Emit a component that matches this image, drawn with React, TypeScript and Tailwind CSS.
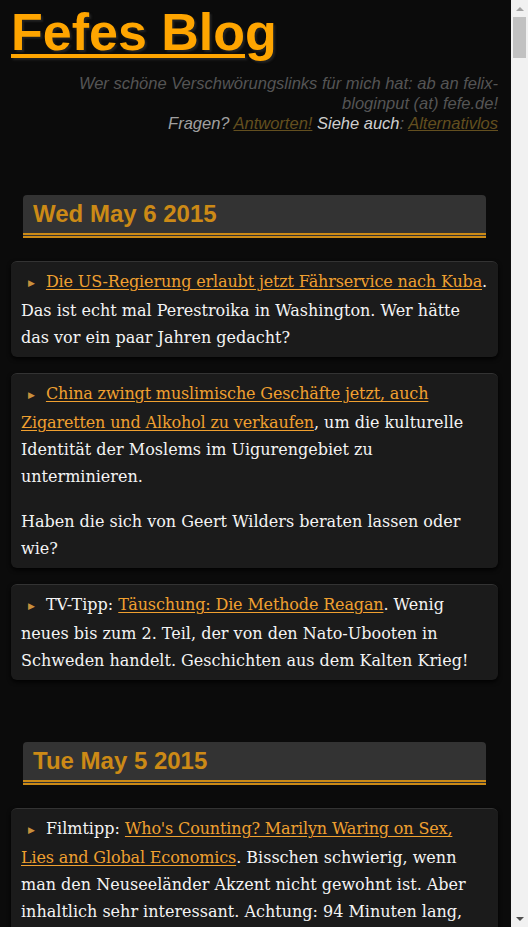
import React from 'react';

type Part = string | { href: string; text: string };

type Post = {
  paragraphs: Part[][];
};

type Day = {
  date: string;
  posts: Post[];
};

const days: Day[] = [
  {
    date: 'Wed May 6 2015',
    posts: [
      {
        paragraphs: [
          [
            { href: '#', text: 'Die US-Regierung erlaubt jetzt Fährservice nach Kuba' },
            '. Das ist echt mal Perestroika in Washington. Wer hätte das vor ein paar Jahren gedacht?',
          ],
        ],
      },
      {
        paragraphs: [
          [
            { href: '#', text: 'China zwingt muslimische Geschäfte jetzt, auch Zigaretten und Alkohol zu verkaufen' },
            ', um die kulturelle Identität der Moslems im Uigurengebiet zu unterminieren.',
          ],
          ['Haben die sich von Geert Wilders beraten lassen oder wie?'],
        ],
      },
      {
        paragraphs: [
          [
            'TV-Tipp: ',
            { href: '#', text: 'Täuschung: Die Methode Reagan' },
            '. Wenig neues bis zum 2. Teil, der von den Nato-Ubooten in Schweden handelt. Geschichten aus dem Kalten Krieg!',
          ],
        ],
      },
    ],
  },
  {
    date: 'Tue May 5 2015',
    posts: [
      {
        paragraphs: [
          [
            'Filmtipp: ',
            { href: '#', text: "Who's Counting? Marilyn Waring on Sex, Lies and Global Economics" },
            '. Bisschen schwierig, wenn man den Neuseeländer Akzent nicht gewohnt ist. Aber inhaltlich sehr interessant. Achtung: 94 Minuten lang, aber es lohnt sich.',
          ],
        ],
      },
      {
        paragraphs: [
          [
            { href: '#', text: 'Die Bundesregierung hat da mal eine Frage' },
            '. Und zwar geht es um die Vorratsdatenspeicherung.',
          ],
        ],
      },
    ],
  },
];

const PostCard: React.FC<{ post: Post }> = ({ post }) => (
  <div className="rounded-[6px] border-t border-[#333] bg-[#1b1b1b] px-[10px] py-[6px] shadow-[0_2px_4px_rgba(0,0,0,0.9)]">
    {post.paragraphs.map((para, i) => (
      <p key={i} className={i > 0 ? 'mt-[18px]' : ''}>
        {i === 0 && (
          <span className="mr-[11px] ml-[7px] inline-block align-[1px] text-[9px] text-[#c8903c]">▶</span>
        )}
        {para.map((part, j) =>
          typeof part === 'string' ? (
            <span key={j}>{part}</span>
          ) : (
            <a
              key={j}
              href={part.href}
              className="tracking-[-0.15px] text-[#f0a030] underline underline-offset-[2px]"
            >
              {part.text}
            </a>
          ),
        )}
      </p>
    ))}
  </div>
);

// fake window scrollbar, the reference shows a classic one
const Scrollbar: React.FC = () => (
  <div className="flex h-full w-[17px] shrink-0 flex-col items-center bg-[#f1f1f1]">
    <div className="flex h-[17px] w-full items-center justify-center">
      <div className="h-0 w-0 border-x-[4px] border-b-[4px] border-x-transparent border-b-[#a3a3a3]" />
    </div>
    <div className="h-[41px] w-[13px] bg-[#c1c1c1]" />
    <div className="flex-1" />
    <div className="flex h-[17px] w-full items-center justify-center">
      <div className="h-0 w-0 border-x-[4px] border-t-[4px] border-x-transparent border-t-[#505050]" />
    </div>
  </div>
);

export default function App() {
  return (
    <div className="flex h-[927px] overflow-hidden bg-[#0b0b0b]">
      <main className="min-w-0 flex-1 overflow-hidden pl-[11px] pr-[13px] pb-10 font-['DejaVu_Serif',serif] text-[16px] leading-[27px] text-[#f4f4f4]">
        {/* Header */}
        <header className="pt-[3px] font-['Liberation_Sans',Arial,sans-serif]">
          <h1 className="text-[52px] font-bold leading-[58px] [text-shadow:2px_2px_2px_#222]">
            <a href="#" className="text-[#ffa500] underline decoration-[4px] underline-offset-[4px]">
              Fefes Blog
            </a>
          </h1>
          <div className="mt-[12px] pl-16 text-right text-[16.5px] italic leading-[20px]">
            <div className="text-[#555]">
              Wer schöne Verschwörungslinks für mich hat: ab an felix-bloginput (at) fefe.de!
            </div>
            <div>
              <span className="text-[#a0a0a0]">Fragen? </span>
              <a href="#" className="text-[#634f1f] underline">Antworten!</a>{' '}
              <span className="text-[#cfcfcf]">Siehe auch</span>
              <span className="text-[#666]">: </span>
              <a href="#" className="text-[#634f1f] underline">Alternativlos</a>
            </div>
          </div>
        </header>

        {days.map((day) => (
          <section key={day.date} className="mt-[62px]">
            <h2 className="mx-[12px] rounded-t-[4px] border-b-[5px] border-double border-[#cc8a16] bg-[#333] px-[10px] pt-[5px] pb-[5px] font-['Liberation_Sans',Arial,sans-serif] text-[24px] font-bold leading-[28px] text-[#cc8a16]">
              {day.date}
            </h2>
            <div className="mt-[23px] flex flex-col gap-[16px]">
              {day.posts.map((post, k) => (
                <PostCard key={k} post={post} />
              ))}
            </div>
          </section>
        ))}
      </main>
      <Scrollbar />
    </div>
  );
}
